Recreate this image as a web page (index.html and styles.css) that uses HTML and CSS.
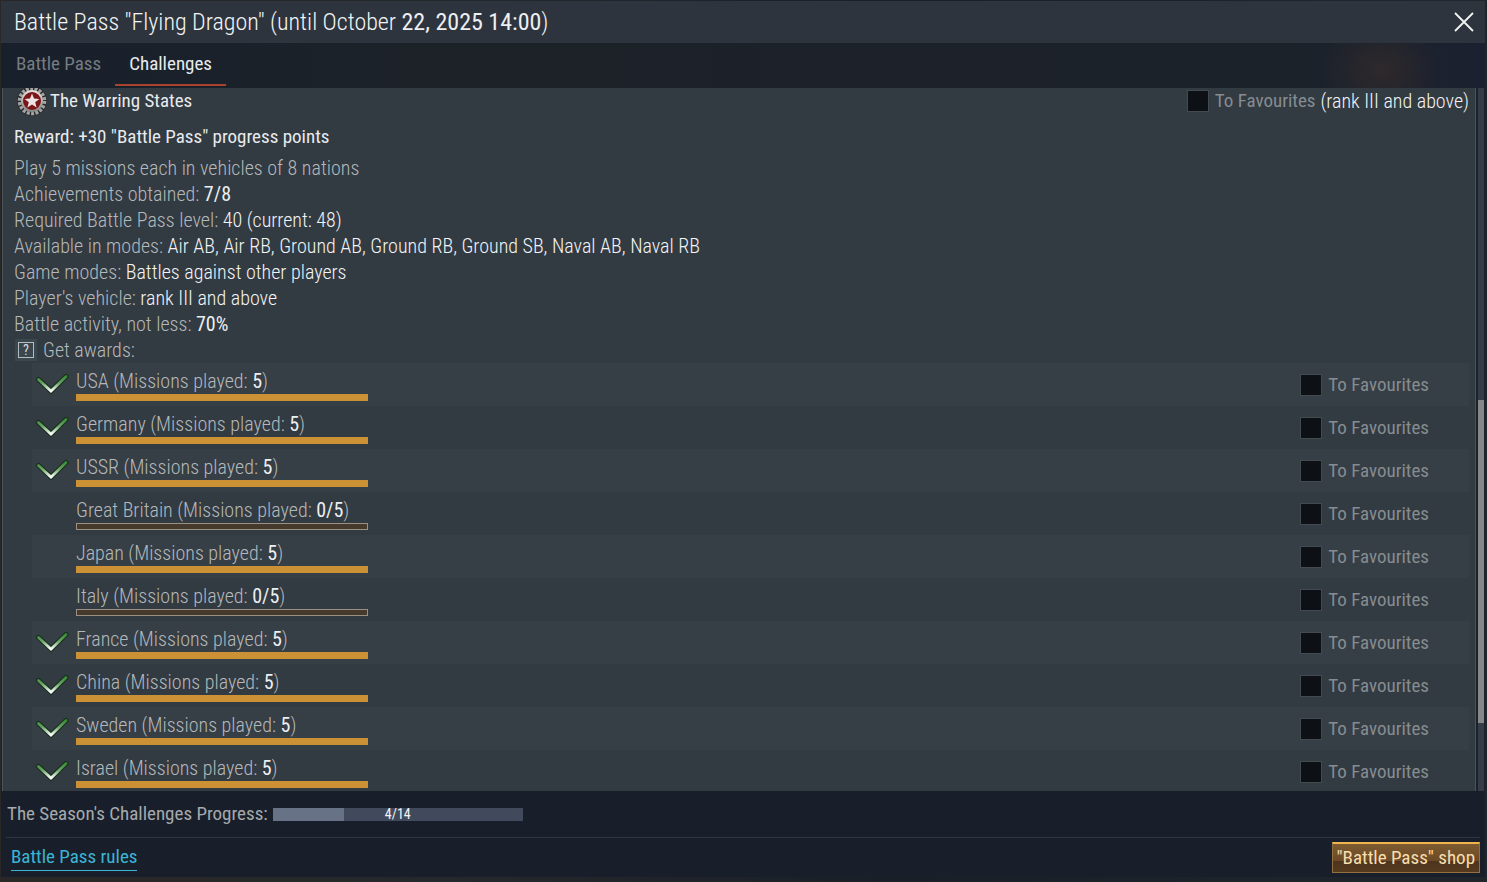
FILE: index.html
```
<!DOCTYPE html>
<html lang="en">
  <head>
    <meta charset="utf-8">
    <title>Battle Pass</title>
    <link rel="stylesheet" href="styles.css">
  </head>
  <body>
    <!-- shared icons -->
    <svg class="sprite" aria-hidden="true">
      <defs>
        <linearGradient id="tick-fill" x1="0" y1="0" x2="0" y2="1">
          <stop offset="0" stop-color="#3c8a39"/>
          <stop offset="0.45" stop-color="#69a165"/>
          <stop offset="1" stop-color="#ffffff"/>
        </linearGradient>
        <linearGradient id="ring-fill" x1="0" y1="0" x2="0" y2="1">
          <stop offset="0" stop-color="#e2dedb"/>
          <stop offset="1" stop-color="#8a8988"/>
        </linearGradient>
        <symbol id="tick" viewBox="0 0 34 22">
          <path d="M3.500 5.500L16 17L31 2.500" fill="none" stroke="#17301b" stroke-width="5" stroke-linecap="round"/>
          <path d="M3.500 5.500L16 17L31 2.500" fill="none" stroke="url(#tick-fill)" stroke-width="2.800" stroke-linecap="round"/>
        </symbol>
      </defs>
    </svg>

    <div class="window">
      <header class="title-bar">
        <h1>Battle Pass "Flying Dragon" (until October <b>22, 2025 14:00</b>)</h1>
        <button class="close" aria-label="Close">
          <svg viewBox="0 0 20 20" width="20" height="20"><path d="M1 1L19 19M19 1L1 19" stroke="#f2f4f5" stroke-width="1.800"/></svg>
        </button>
      </header>

      <nav class="tabs">
        <button class="tab">Battle Pass</button>
        <button class="tab active">Challenges</button>
      </nav>

      <main class="content">
        <section class="challenge">
          <div class="challenge-head">
            <svg class="medal" viewBox="0 0 30 30" aria-hidden="true">
              <circle cx="15" cy="15" r="12.500" fill="none" stroke="#25282b" stroke-width="5"/>
              <circle cx="15" cy="15" r="12.500" fill="none" stroke="#a3a3a0" stroke-width="3.600" stroke-dasharray="3 1.360"/>
              <circle cx="15" cy="15" r="10" fill="#7c1518" stroke="url(#ring-fill)" stroke-width="2"/>
              <path d="M15 7.500L17 12.600L22.400 12.900L18.200 16.300L19.600 21.500L15 18.600L10.400 21.500L11.800 16.300L7.600 12.900L13 12.600Z" fill="#ece4e2"/>
            </svg>
            <h2>The Warring States</h2>
            <label class="fav"><input type="checkbox"> To Favourites</label>
            <span class="rank">(rank III and above)</span>
          </div>
          <p class="reward">Reward: +30 "Battle Pass" progress points</p>
          <div class="details">
            <p>Play 5 missions each in vehicles of 8 nations</p>
            <p>Achievements obtained: <b>7/8</b></p>
            <p>Required Battle Pass level: <span>40 (current: 48)</span></p>
            <p>Available in modes: <span>Air AB, Air RB, Ground AB, Ground RB, Ground SB, Naval AB, Naval RB</span></p>
            <p>Game modes: <span>Battles against other players</span></p>
            <p>Player's vehicle: <span>rank III and above</span></p>
            <p>Battle activity, not less: <b>70%</b></p>
            <p class="awards-title"><button class="help" aria-label="Help"><i>?</i></button>Get awards:</p>
          </div>

          <ul class="awards">
            <li>
              <svg class="tick"><use href="#tick"/></svg>
              <div class="award"><p>USA (Missions played: <b>5</b>)</p><div class="bar full"></div></div>
              <label class="fav"><input type="checkbox"> To Favourites</label>
            </li>
            <li>
              <svg class="tick"><use href="#tick"/></svg>
              <div class="award"><p>Germany (Missions played: <b>5</b>)</p><div class="bar full"></div></div>
              <label class="fav"><input type="checkbox"> To Favourites</label>
            </li>
            <li>
              <svg class="tick"><use href="#tick"/></svg>
              <div class="award"><p>USSR (Missions played: <b>5</b>)</p><div class="bar full"></div></div>
              <label class="fav"><input type="checkbox"> To Favourites</label>
            </li>
            <li>
              <span class="tick"></span>
              <div class="award"><p>Great Britain (Missions played: <b>0/5</b>)</p><div class="bar"></div></div>
              <label class="fav"><input type="checkbox"> To Favourites</label>
            </li>
            <li>
              <span class="tick"></span>
              <div class="award"><p>Japan (Missions played: <b>5</b>)</p><div class="bar full"></div></div>
              <label class="fav"><input type="checkbox"> To Favourites</label>
            </li>
            <li>
              <span class="tick"></span>
              <div class="award"><p>Italy (Missions played: <b>0/5</b>)</p><div class="bar"></div></div>
              <label class="fav"><input type="checkbox"> To Favourites</label>
            </li>
            <li>
              <svg class="tick"><use href="#tick"/></svg>
              <div class="award"><p>France (Missions played: <b>5</b>)</p><div class="bar full"></div></div>
              <label class="fav"><input type="checkbox"> To Favourites</label>
            </li>
            <li>
              <svg class="tick"><use href="#tick"/></svg>
              <div class="award"><p>China (Missions played: <b>5</b>)</p><div class="bar full"></div></div>
              <label class="fav"><input type="checkbox"> To Favourites</label>
            </li>
            <li>
              <svg class="tick"><use href="#tick"/></svg>
              <div class="award"><p>Sweden (Missions played: <b>5</b>)</p><div class="bar full"></div></div>
              <label class="fav"><input type="checkbox"> To Favourites</label>
            </li>
            <li>
              <svg class="tick"><use href="#tick"/></svg>
              <div class="award"><p>Israel (Missions played: <b>5</b>)</p><div class="bar full"></div></div>
              <label class="fav"><input type="checkbox"> To Favourites</label>
            </li>
          </ul>
        </section>
        <div class="scrollbar"><div class="thumb"></div></div>
      </main>

      <footer>
        <div class="season">
          <span>The Season's Challenges Progress:</span>
          <div class="season-bar"><div class="season-fill"></div><span>4/14</span></div>
        </div>
        <div class="actions">
          <a href="#rules">Battle Pass rules</a>
          <button class="shop">"Battle Pass" shop</button>
        </div>
      </footer>
    </div>
  </body>
</html>
```

FILE: styles.css
```
* {
  box-sizing: border-box;
}

body {
  margin: 0;
  padding: 1px 2px 5px 1px;
  height: 100vh;
  overflow: hidden;
  background: linear-gradient(90deg, #2a2826, #25282c 30%, #1a1f27 60%, #20262c);
  color: #b4b8ba;
  font-family: "Roboto Condensed", Roboto, sans-serif;
  font-size: 20px;
  font-weight: 300;
  line-height: 26px;
}

h1,
h2,
p,
ul {
  margin: 0;
  padding: 0;
  font-weight: 300;
}

b {
  color: #eceff1;
  font-weight: 400;
}

button {
  padding: 0;
  border: 0;
  background: none;
  color: inherit;
  font: inherit;
  cursor: pointer;
}

.sprite {
  position: absolute;
  width: 0;
  height: 0;
}

.window {
  display: flex;
  flex-direction: column;
  height: 100%;
  background: #181f2a;
}

/* header */
.title-bar {
  display: flex;
  align-items: center;
  justify-content: space-between;
  height: 42px;
  padding: 0 11px 0 13px;
  background: #2e343d;
}

.title-bar h1 {
  color: #f2f4f5;
  font-size: 24px;
}

.close {
  display: flex;
}

.tabs {
  display: flex;
  height: 45px;
  padding-left: 1px;
  background:
    radial-gradient(ellipse 60px 50px at 93% 60%, #2e292b, transparent),
    linear-gradient(90deg, #18202c, #1d2228 30%, #1c212a 60%, #1c2229 85%, #1b2130);
}

.tab {
  height: 43px;
  padding: 0 14px;
  border-bottom: 2px solid transparent;
  color: #777c81;
  font-size: 19px;
  font-weight: 400;
}

.tab.active {
  border-color: #a8432f;
  color: #e8ebed;
}

/* challenge list */
.content {
  display: flex;
  flex: 1;
  gap: 2px;
  min-height: 0;
  overflow: hidden;
  padding: 0 1px;
  background: #1c222b;
}

.challenge {
  flex: 1;
  padding: 0 6px 0 11px;
  border: solid #4b535b;
  border-width: 0 1px;
  background: #323a42;
}

.challenge-head {
  display: flex;
  align-items: center;
  height: 26px;
}

.medal {
  width: 30px;
  height: 30px;
  margin: 0 3px;
}

.challenge-head h2 {
  flex: 1;
  color: #e8ebed;
  font-size: 19px;
  font-weight: 400;
}

.rank {
  margin-left: 5px;
  color: #f2f4f5;
}

.fav {
  display: flex;
  align-items: center;
  gap: 6px;
  color: #868c90;
  font-size: 19px;
  font-weight: 400;
}

.fav input {
  appearance: none;
  width: 22px;
  height: 22px;
  margin: 0;
  border: 1px solid #424a52;
  background: #0d1116;
}

.reward {
  margin: 10px 0 5px;
  color: #e8ebed;
  font-size: 19px;
  font-weight: 400;
}

.details span {
  color: #f2f4f5;
}

.awards-title {
  display: flex;
  align-items: center;
}

.help {
  display: flex;
  width: 22px;
  height: 22px;
  margin: 0 6px 0 1px;
  padding: 3px;
  background: #3b474f;
}

.help i {
  flex: 1;
  height: 16px;
  border: 1px solid #b5bcc0;
  color: #d8dcde;
  font-size: 14px;
  font-style: normal;
  font-weight: 400;
  line-height: 14px;
}

.awards {
  margin-left: 18px;
  list-style: none;
}

.awards li {
  display: flex;
  align-items: center;
  height: 43px;
  padding: 0 40px 0 3px;
}

.awards li:nth-child(odd) {
  background: #363e46;
}

.tick {
  width: 34px;
  height: 22px;
  margin-right: 7px;
}

.award {
  flex: 1;
}

.bar {
  width: 292px;
  height: 7px;
  border: 1px solid #9a9184;
  background: #453a2c;
}

.bar.full {
  border-color: #cb9134;
  background: #cb9134;
}

.scrollbar {
  width: 6px;
  background: #363c48;
}

.thumb {
  height: 46%;
  margin-top: 312px;
  background: #85878a;
}

/* footer */
footer {
  color: #a5aaad;
  font-size: 19px;
  font-weight: 400;
}

.season {
  display: flex;
  align-items: center;
  gap: 5px;
  height: 46px;
  padding: 0 6px;
}

.season-bar {
  position: relative;
  width: 250px;
  height: 13px;
  background: #414a5c;
  color: #f2f4f5;
  font-size: 14px;
  line-height: 13px;
  text-align: center;
}

.season-fill {
  width: 71px;
  height: 13px;
  background: #677286;
}

.season-bar span {
  position: absolute;
  inset: 0;
}

.actions {
  display: flex;
  align-items: center;
  justify-content: space-between;
  height: 40px;
  margin: 0 5px;
  padding-left: 5px;
  border-top: 1px solid #2e3640;
}

.actions a {
  border-bottom: 1px solid #3cb4d4;
  color: #3cb4d4;
  text-decoration: none;
}

.shop {
  height: 31px;
  padding: 0 4px;
  border: 1px solid #93703f;
  border-top: 2px solid #efb54c;
  background: linear-gradient(#7d5a30, #6c4a26 60%, #4c351e 60%, #553a1e);
  color: #f7deb0;
}
```
